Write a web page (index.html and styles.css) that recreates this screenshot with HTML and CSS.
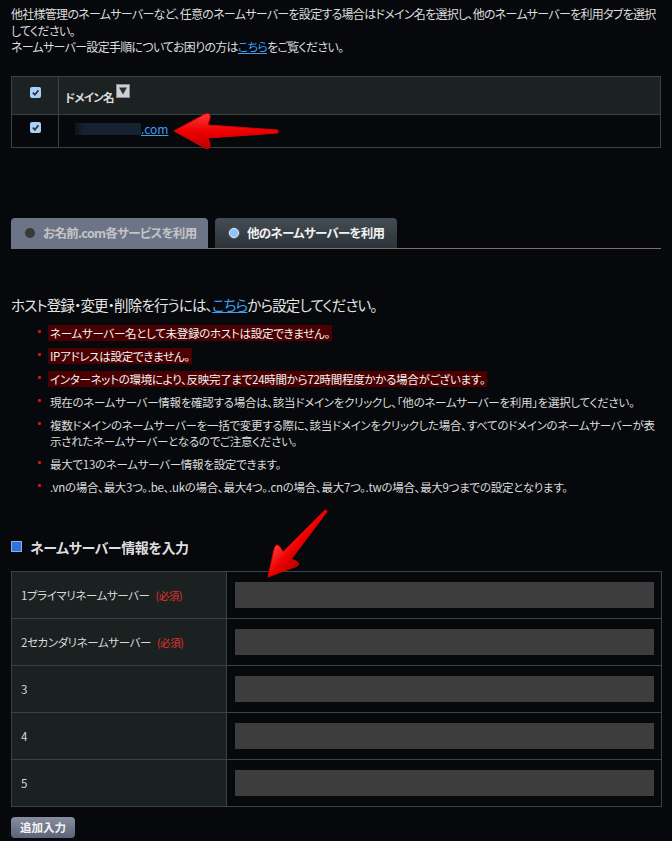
FILE: index.html
```html
<!DOCTYPE html>
<html lang="ja">
<head>
<meta charset="utf-8">
<title>ネームサーバー設定</title>
<link rel="stylesheet" href="styles.css">
</head>
<body>
<div class="page">
  <p class="intro">他社様管理のネームサーバーなど、任意のネームサーバーを設定する場合はドメイン名を選択し、他のネームサーバーを利用タブを選択してください。<br>ネームサーバー設定手順についてお困りの方は<a href="#">こちら</a>をご覧ください。</p>

  <table class="domains">
    <tr class="head">
      <th class="chk"><svg class="cb" viewBox="0 0 11 11" width="11" height="11"><rect x="0" y="0" width="11" height="11" rx="2" fill="#a9d1f7"/><path d="M2.8 5.6 L4.9 7.7 L8.4 3.4" fill="none" stroke="#2b3038" stroke-width="1.7"/></svg></th>
      <th class="name">ドメイン名<svg class="sort" viewBox="0 0 14 14" width="14" height="14"><rect x="0.5" y="0.5" width="13" height="13" fill="#cfd0d2" stroke="#8a8c90"/><path d="M3 3.5 L11 3.5 L7 10.5 Z" fill="#2c2f33"/></svg></th>
    </tr>
    <tr class="row">
      <td class="chk"><svg class="cb" viewBox="0 0 11 11" width="11" height="11"><rect x="0" y="0" width="11" height="11" rx="2" fill="#a9d1f7"/><path d="M2.8 5.6 L4.9 7.7 L8.4 3.4" fill="none" stroke="#2b3038" stroke-width="1.7"/></svg></td>
      <td class="name"><span class="blur"></span><a href="#">.com</a></td>
    </tr>
  </table>

  <div class="tabs">
    <div class="tab off"><span class="radio-off"></span>お名前.com各サービスを利用</div>
    <div class="tab on"><span class="radio-on"></span>他のネームサーバーを利用</div>
  </div>

  <h2 class="host">ホスト登録・変更・削除を行うには、<a href="#">こちら</a>から設定してください。</h2>

  <ul class="notes">
    <li><span class="warn">ネームサーバー名として未登録のホストは設定できません。</span></li>
    <li><span class="warn">IPアドレスは設定できません。</span></li>
    <li><span class="warn">インターネットの環境により、反映完了まで24時間から72時間程度かかる場合がございます。</span></li>
    <li>現在のネームサーバー情報を確認する場合は、該当ドメインをクリックし、「他のネームサーバーを利用」を選択してください。</li>
    <li>複数ドメインのネームサーバーを一括で変更する際に、該当ドメインをクリックした場合、すべてのドメインのネームサーバーが表示されたネームサーバーとなるのでご注意ください。</li>
    <li>最大で13のネームサーバー情報を設定できます。</li>
    <li>.vnの場合、最大3つ。.be、.ukの場合、最大4つ。.cnの場合、最大7つ。.twの場合、最大9つまでの設定となります。</li>
  </ul>

  <h3 class="section"><span class="sq"></span>ネームサーバー情報を入力</h3>

  <table class="ns">
    <tr><th>1プライマリネームサーバー<span class="req">(必須)</span></th><td><div class="field"></div></td></tr>
    <tr><th>2セカンダリネームサーバー<span class="req">(必須)</span></th><td><div class="field"></div></td></tr>
    <tr><th>3</th><td><div class="field"></div></td></tr>
    <tr><th>4</th><td><div class="field"></div></td></tr>
    <tr><th>5</th><td><div class="field"></div></td></tr>
  </table>

  <button class="add" type="button">追加入力</button>

  <svg class="marks" width="672" height="841" viewBox="0 0 672 841">
    <defs>
      <linearGradient id="rg" x1="0" y1="0" x2="0" y2="1">
        <stop offset="0" stop-color="#ff3a3a"/>
        <stop offset="0.5" stop-color="#ee0000"/>
        <stop offset="1" stop-color="#b80000"/>
      </linearGradient>
    </defs>
    <path d="M174 131 L205 114 Q211 112 210 118 L208 125 L278 130 L278 133 L208 138 L210 144 Q211 150 205 148 Z" fill="url(#rg)" stroke="#e00000" stroke-width="1" stroke-linejoin="round"/>
    <g transform="translate(268 577) rotate(-49) scale(0.85) translate(-174 -131)">
      <path d="M174 131 L205 114 Q211 112 210 118 L208 125 L278 130 L278 133 L208 138 L210 144 Q211 150 205 148 Z" fill="url(#rg)" stroke="#e00000" stroke-width="1" stroke-linejoin="round"/>
    </g>
  </svg>
</div>
</body>
</html>
```

FILE: styles.css
```css
html, body {
  margin: 0;
  padding: 0;
}
body {
  background: #06080b;
  color: #dcdcdc;
  font-family: "Noto Sans CJK JP", "Noto Sans", sans-serif;
  font-feature-settings: "palt";
  font-size: 12px;
}
a {
  color: #3f9ef0;
  text-decoration: underline;
}
.page {
  position: relative;
  width: 650px;
  padding: 6px 11px 0;
}
.intro {
  margin: 0;
  line-height: 16.5px;
  letter-spacing: -0.72px;
}

/* domain table */
.domains {
  margin-top: 20px;
  width: 650px;
  border-collapse: collapse;
  border: 1px solid #3a4043;
}
.domains td, .domains th {
  border: 1px solid #3a4043;
  padding: 0;
  text-align: left;
}
.domains .head th {
  background: #1c2122;
  height: 34px;
  font-weight: bold;
  font-size: 11.5px;
  letter-spacing: -0.8px;
}
.domains .row td {
  background: #06080b;
  height: 32px;
}
.domains .chk {
  width: 46px;
  text-align: center;
}
.cb {
  display: block;
  margin: 0 auto;
}
.domains .head .cb { margin-top: -6px; }
.domains .row .cb { position: relative; top: -3px; }
.domains .name {
  padding-left: 6px;
}
.domains .head .name { padding-top: 3px; }
.domains .row .name > * { position: relative; top: -2px; }
.sort {
  vertical-align: -1px;
  margin-left: 2px;
  position: relative;
  top: -5px;
}
.blur {
  display: inline-block;
  width: 66px;
  height: 12px;
  margin-left: 10px;
  background: linear-gradient(90deg, #0e141c 0%, #172231 15%, #172231 100%);
  vertical-align: -1px;
}
.domains .row a {
  font-size: 12px;
}

/* tabs */
.tabs {
  margin-top: 70px;
  display: flex;
  gap: 7px;
  height: 30px;
  border-bottom: 1px solid #7a7264;
}
.tab {
  display: flex;
  align-items: center;
  border-radius: 4px 4px 0 0;
  font-weight: bold;
  font-size: 12.5px;
  letter-spacing: -0.7px;
  box-sizing: border-box;
}
.tab.off {
  width: 197px;
  background: #6c7488;
  color: #c4c4c4;
  padding-left: 14px;
}
.tab.on {
  width: 182px;
  background: linear-gradient(#444c55, #2b3238);
  color: #f2f2f2;
  padding-left: 14px;
}
.radio-off {
  width: 10px;
  height: 10px;
  border-radius: 50%;
  background: #383838;
  margin-right: 8px;
}
.radio-on {
  width: 8px;
  height: 8px;
  border-radius: 50%;
  background: #8fc2ff;
  border: 1.5px solid #e8f0f8;
  box-shadow: 0 0 0 1px #56606a;
  margin-right: 8px;
}

/* host heading */
.host {
  margin: 46px 0 0;
  font-size: 14.5px;
  letter-spacing: -0.85px;
  font-weight: normal;
  line-height: 20px;
  color: #e4e4e4;
}

/* notes */
.notes {
  list-style: none;
  margin: 10px 0 0;
  padding: 0 0 0 39px;
  font-size: 11.5px;
  letter-spacing: -0.28px;
  line-height: 16px;
}
.notes li {
  position: relative;
  margin-bottom: 7px;
}
.notes li:last-child { margin-bottom: 0; }
.notes li::before {
  content: "";
  position: absolute;
  left: -12px;
  top: 5px;
  width: 3px;
  height: 3px;
  background: #e01010;
  border-radius: 1px;
}
.warn {
  background: #4a0000;
  color: #f4f4f4;
  padding: 0 2px;
  margin-left: -2px;
}

/* section */
.section {
  margin: 42px 0 0;
  font-size: 14px;
  letter-spacing: -0.4px;
  line-height: 20px;
  font-weight: bold;
  color: #dedede;
  display: flex;
  align-items: center;
}
.sq {
  width: 9px;
  height: 9px;
  background: #2f74dc;
  border: 1px solid #8fb0dc;
  margin-right: 8px;
}

/* name server table */
.ns {
  margin-top: 14px;
  width: 651px;
  border-collapse: collapse;
  border: 1px solid #3a4244;
}
.ns th, .ns td {
  border: 1px solid #3a4244;
  height: 46px;
  padding: 0;
}
.ns th {
  width: 205px;
  background: #1b2021;
  text-align: left;
  padding-left: 9px;
  font-size: 11.5px;
  letter-spacing: -0.4px;
  font-weight: normal;
  color: #dadada;
}
.ns td {
  background: #06080b;
  padding: 0 7px 0 8px;
}
.req {
  color: #e5302c;
  font-size: 10.5px;
  margin-left: 6px;
}
.field {
  height: 26px;
  background: #3d3d3d;
}

/* button */
.add {
  margin-top: 10px;
  display: block;
  width: 64px;
  height: 21px;
  border: 0;
  border-radius: 4px;
  background: linear-gradient(#878ea0, #5c6376);
  color: #f4f4f4;
  font-family: "Noto Sans CJK JP", sans-serif;
  font-feature-settings: "palt";
  font-size: 11.5px;
  font-weight: bold;
  padding: 0;
}

.marks {
  position: absolute;
  left: 0;
  top: 0;
  pointer-events: none;
}
```
